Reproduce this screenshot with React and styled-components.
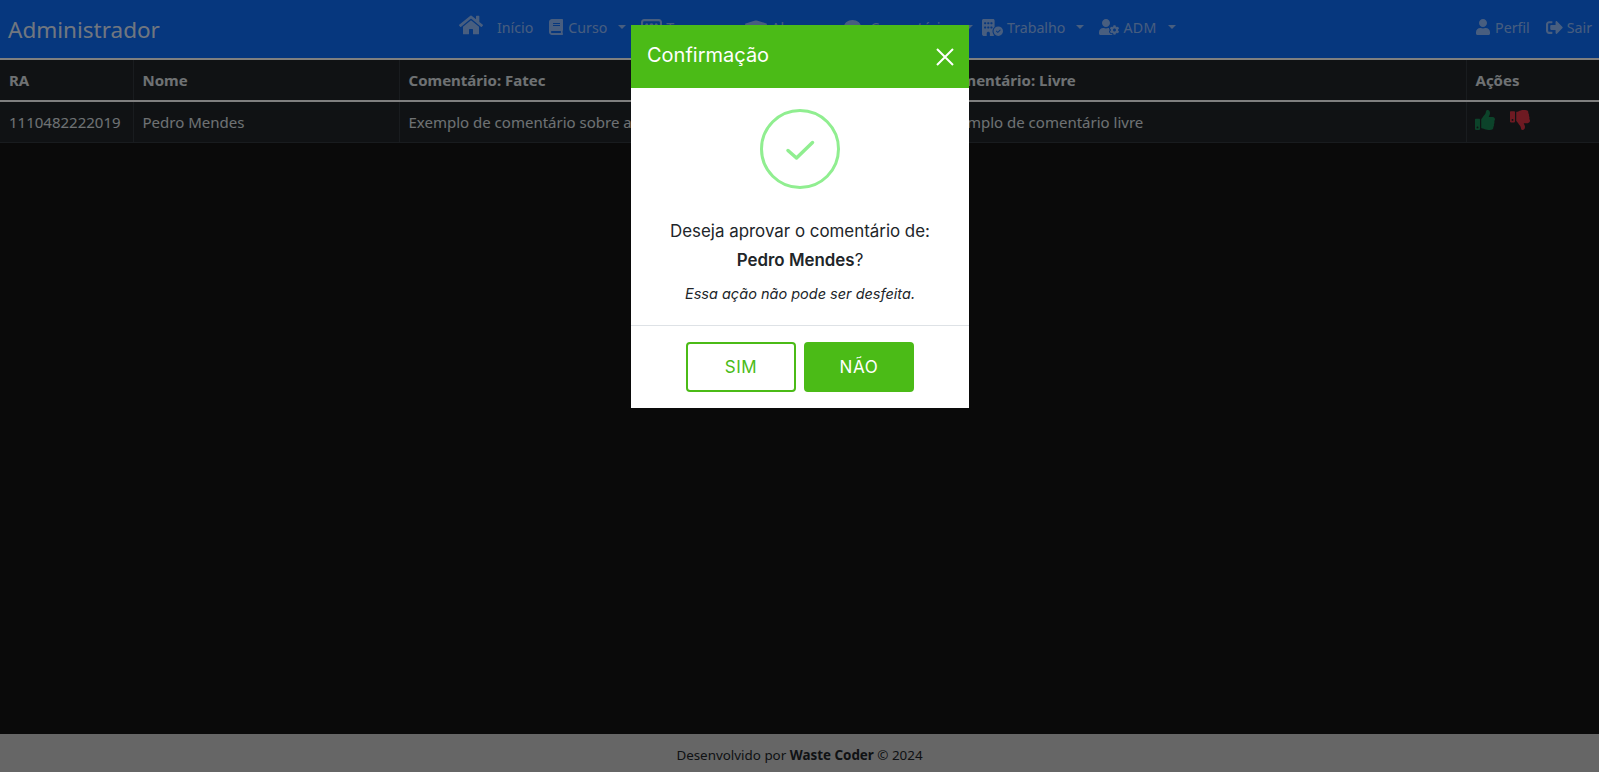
import React from "react";
import styled, { createGlobalStyle } from "styled-components";
import { FaHome, FaBook, FaGraduationCap, FaUser, FaUserCog, FaThumbsUp, FaThumbsDown, FaComment, FaSignOutAlt } from "react-icons/fa";
import { FaBuildingCircleCheck, FaUsersRectangle } from "react-icons/fa6";

const Global = createGlobalStyle`
  html, body { margin: 0; padding: 0; height: 100%; background: #141414; }
  #root { height: 100%; }
  * { box-sizing: border-box; }
  body { font-family: "Noto Sans", "Open Sans", sans-serif; font-size: 15px; color: #dee2e6; overflow: hidden; }
`;

const Page = styled.div`
  height: 772px; display: flex; flex-direction: column;
`;
const NavBar = styled.nav`
  height: 58px; flex: none; background: #0d6efd; display: flex; align-items: center; padding: 0 7px 0 8px; color: #fff;
`;
const Brand = styled.div`
  font-size: 22.5px; width: 451px; color: rgba(255,255,255,.9); flex: none;
`;
const NavItems = styled.div`
  display: flex; align-items: center; gap: 15px; flex: 1; margin-bottom: 4px;
`;
const NavLink = styled.a`
  display: inline-flex; align-items: center; gap: ${p => p.$gap || 4}px; font-size: 14.2px; color: rgba(255,255,255,.55);
  letter-spacing: ${p => p.$ls || 0}px; margin-right: ${p => p.$mr || 0}px;
  svg { flex: none; }
`;
const HomeIcon = styled(FaHome)`
  margin-bottom: 4px;
`;
const Caret = styled.span`
  display: inline-block; margin-left: 7px; border-top: 4.8px solid currentColor; border-left: 4.4px solid transparent; border-right: 4.4px solid transparent;
`;
const RightLinks = styled.div`
  display: flex; align-items: center; gap: 16px; margin-bottom: 4px;
`;
const Table = styled.table`
  width: 100%; border-collapse: collapse; table-layout: fixed; background: #212529; color: #dee2e6; font-size: 15px;
  border-top: 2px solid #fff;
`;
const Th = styled.th`
  height: 42px; padding: 0 9px; text-align: left; font-weight: 700; border-left: 1px solid #32383e; border-bottom: 2px solid #fff; white-space: nowrap;
  &:first-child { border-left: 0; }
`;
const Td = styled.td`
  height: 41px; padding: 0 9px; border-left: 1px solid #32383e; border-bottom: 1px solid #32383e; white-space: nowrap;
  &:first-child { border-left: 0; }
`;
const Thumb = styled.span`
  display: inline-flex; color: ${p => p.$c}; margin: 0 16px 0 -1px; vertical-align: -1px;
`;
const Main = styled.main`
  flex: 1;
`;
const Footer = styled.footer`
  height: 38px; flex: none; background: #ccc; color: #212529; display: flex; align-items: center; justify-content: center; font-size: 13.4px;
  padding-top: 3px; white-space: pre;
`;
const Backdrop = styled.div`
  position: fixed; inset: 0; background: rgba(0,0,0,.5);
`;
const Modal = styled.div`
  position: fixed; left: 631px; top: 25px; width: 338px; height: 383px; background: #fff; display: flex; flex-direction: column;
  font-family: "Inter", "Open Sans", sans-serif; color: #212529;
`;
const ModalHeader = styled.div`
  height: 63px; flex: none; background: #4bbb17; color: #fff; display: flex; align-items: center; justify-content: space-between; padding: 0 15px 0 16px;
  font-size: 20px;
`;
const Title = styled.span`
  margin-bottom: 3px;
`;
const CheckWrap = styled.div`
  margin: 21px auto 0; width: 80px; height: 80px; flex: none;
`;
const Message = styled.p`
  margin: ${p => p.$mt}px 0 0; text-align: center; font-size: ${p => p.$fs || 16.9}px; line-height: 24px; font-style: ${p => p.$it ? "italic" : "normal"};
  b { font-weight: 600; }
`;
const Buttons = styled.div`
  margin-top: 19px; border-top: 1px solid #dee2e6; padding-top: 16px; display: flex; justify-content: center; gap: 8px;
`;
const Btn = styled.button`
  width: 110px; height: 50px; border-radius: 4px; border: 2px solid #4bbb17; font: inherit; font-size: 17px; letter-spacing: .6px;
  background: ${p => p.$solid ? "#4bbb17" : "#fff"}; color: ${p => p.$solid ? "#fff" : "#4bbb17"};
`;

export default function App() {
  return (
    <Page>
      <Global />
      <NavBar>
        <Brand>Administrador</Brand>
        <NavItems>
          <NavLink $gap={14}><HomeIcon size={24} />Início</NavLink>
          <NavLink><FaBook size={16} />Curso<Caret /></NavLink>
          <NavLink $mr={2}><FaUsersRectangle size={21} />Turma<Caret /></NavLink>
          <NavLink><FaGraduationCap size={22} />Aluno<Caret /></NavLink>
          <NavLink $gap={9} $mr={-6}><FaComment size={17} />Comentário<Caret /></NavLink>
          <NavLink><FaBuildingCircleCheck size={21} />Trabalho<Caret /></NavLink>
          <NavLink $ls={0.4}><FaUserCog size={20} />ADM<Caret /></NavLink>
        </NavItems>
        <RightLinks>
          <NavLink><FaUser size={16} />Perfil</NavLink>
          <NavLink><FaSignOutAlt size={17} />Sair</NavLink>
        </RightLinks>
      </NavBar>
      <Table>
        <colgroup>
          <col style={{ width: 133 }} />
          <col style={{ width: 266 }} />
          <col style={{ width: 534 }} />
          <col style={{ width: 533 }} />
          <col />
        </colgroup>
        <thead>
          <tr><Th>RA</Th><Th>Nome</Th><Th>Comentário: Fatec</Th><Th>Comentário: Livre</Th><Th>Ações</Th></tr>
        </thead>
        <tbody>
          <tr>
            <Td>1110482222019</Td>
            <Td>Pedro Mendes</Td>
            <Td>Exemplo de comentário sobre a Fatec</Td>
            <Td>Exemplo de comentário livre</Td>
            <Td><Thumb $c="#198754"><FaThumbsUp size={20} /></Thumb><Thumb $c="#dc3545"><FaThumbsDown size={20} /></Thumb></Td>
          </tr>
        </tbody>
      </Table>
      <Main />
      <Footer>Desenvolvido por <b>Waste Coder</b> © 2024</Footer>
      <Backdrop />
      <Modal>
        <ModalHeader>
          <Title>Confirmação</Title>
          <svg width="18" height="18" viewBox="0 0 18 18"><path d="M1 1L17 17M17 1L1 17" stroke="#fff" strokeWidth="2" /></svg>
        </ModalHeader>
        <CheckWrap>
          <svg width="80" height="80" viewBox="0 0 80 80" fill="none">
            <circle cx="40" cy="40" r="38.5" stroke="#90ee90" strokeWidth="3" />
            <path d="M28 41.5L36.5 49L52.5 33.5" stroke="#90ee90" strokeWidth="3.5" strokeLinecap="round" strokeLinejoin="round" />
          </svg>
        </CheckWrap>
        <Message $mt={30}>Deseja aprovar o comentário de:</Message>
        <Message $mt={5}><b>Pedro Mendes</b>?</Message>
        <Message $mt={10} $fs={14.5} $it>Essa ação não pode ser desfeita.</Message>
        <Buttons>
          <Btn>SIM</Btn>
          <Btn $solid>NÃO</Btn>
        </Buttons>
      </Modal>
    </Page>
  );
}
